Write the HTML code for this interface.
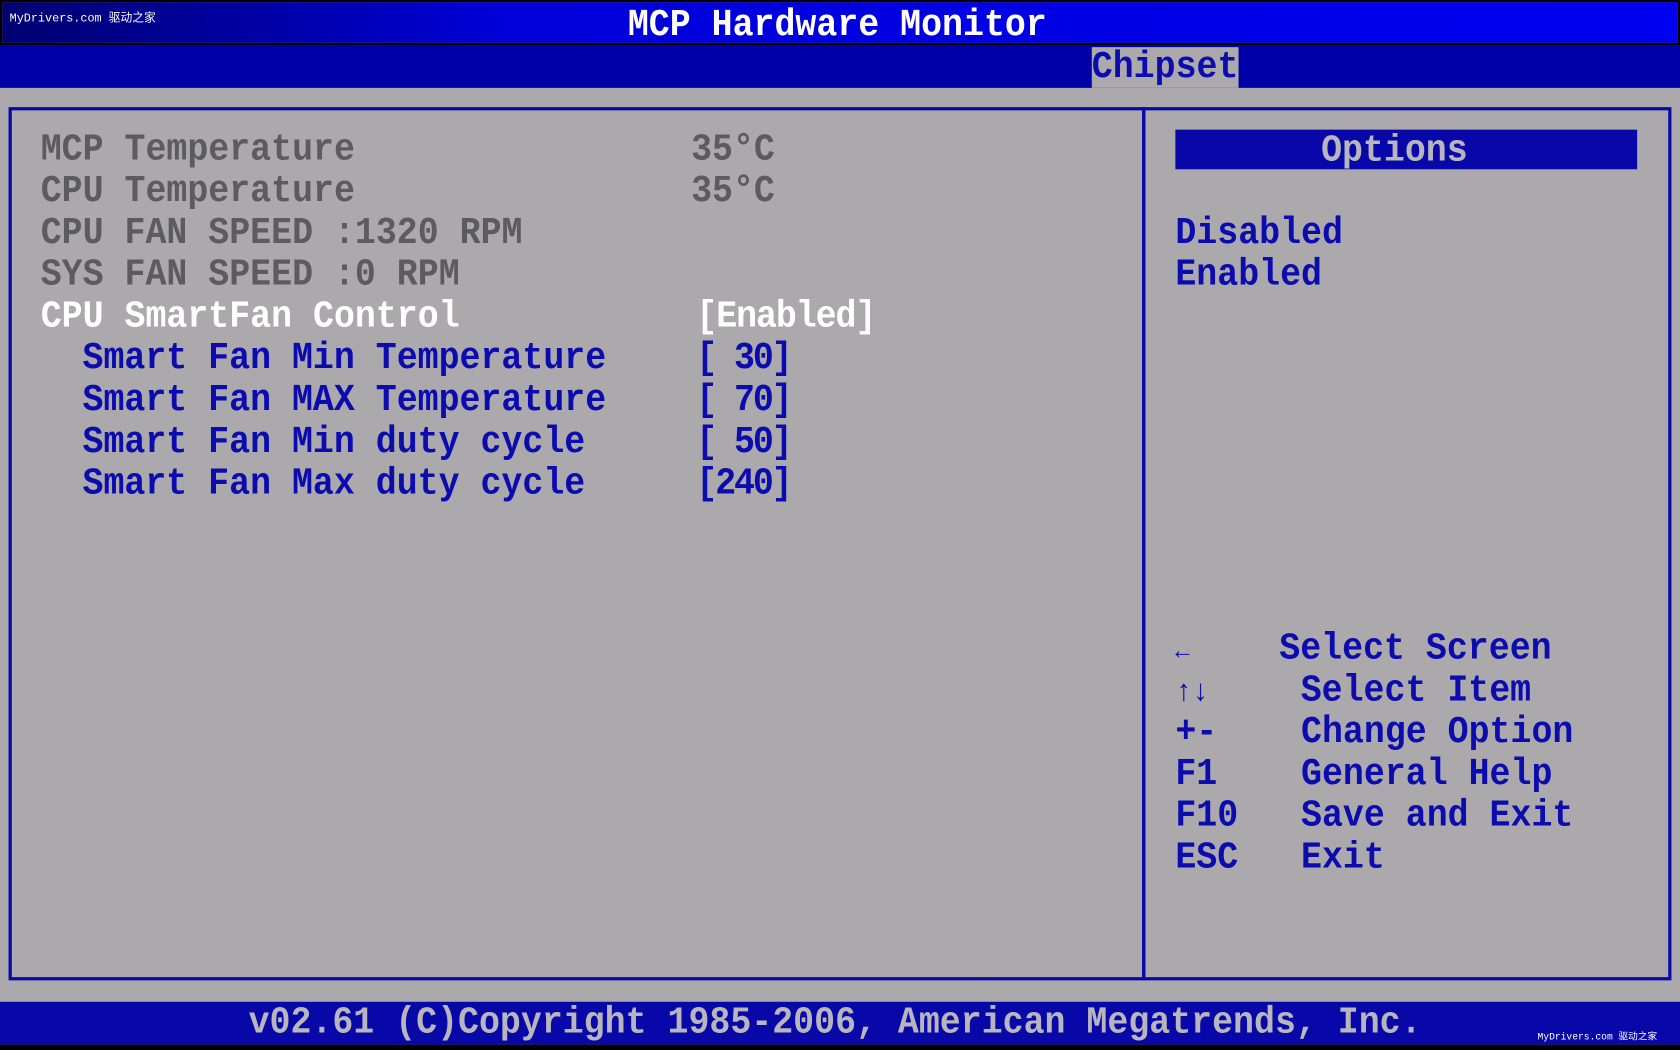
<!DOCTYPE html>
<html><head><meta charset="utf-8"><style>
html,body{margin:0;padding:0;width:1680px;height:1050px;overflow:hidden;background:#000}
#w{position:absolute;left:0;top:0;width:1568px;height:980px;transform:scale(1.07143);transform-origin:0 0;background:#aba9ac;font-family:"Liberation Mono",monospace;font-weight:bold;font-size:32.6px}
.a{position:absolute;white-space:pre;line-height:39px;transform:scaleY(1.08);transform-origin:0 50%}
.g{color:#5c5c60}.wh{color:#fff}.b{color:#0c0cae}
</style></head><body><div id="w">
<div style="position:absolute;left:0;top:0;width:1568px;height:42px;background:linear-gradient(90deg,#000070,#0000d8 30%,#0000f0);border:2px solid #000;box-sizing:border-box"></div>
<div style="position:absolute;left:9px;top:8px;color:#fff;font-size:11px;font-weight:normal;font-family:'Liberation Mono','Noto Sans CJK SC',monospace">MyDrivers.com 驱动之家</div>
<div class="a wh" style="left:586px;top:4px">MCP Hardware Monitor</div>
<div style="position:absolute;left:0;top:42px;width:1568px;height:40px;background:#0000a8"></div>
<div style="position:absolute;left:1019px;top:44px;width:137px;height:38px;background:#aba9ac"></div>
<div class="a b" style="left:1019px;top:43px">Chipset</div>
<div style="position:absolute;left:8px;top:100px;width:1061px;height:815px;border:3px solid #0808a8;box-sizing:border-box"></div>
<div style="position:absolute;left:1066px;top:100px;width:494px;height:815px;border:3px solid #0808a8;box-sizing:border-box"></div>
<div class="a g" style="left:38px;top:120px">MCP Temperature</div>
<div class="a g" style="left:645px;top:120px">35°C</div>
<div class="a g" style="left:38px;top:159px">CPU Temperature</div>
<div class="a g" style="left:645px;top:159px">35°C</div>
<div class="a g" style="left:38px;top:198px">CPU FAN SPEED :1320 RPM</div>
<div class="a g" style="left:38px;top:237px">SYS FAN SPEED :0 RPM</div>
<div class="a wh" style="left:38px;top:276px">CPU SmartFan Control</div>
<div class="a wh" style="left:650px;top:276px;letter-spacing:-1px">[Enabled]</div>
<div class="a b" style="left:77px;top:315px">Smart Fan Min Temperature</div>
<div class="a b" style="left:650px;top:315px;letter-spacing:-2px">[ 30]</div>
<div class="a b" style="left:77px;top:354px">Smart Fan MAX Temperature</div>
<div class="a b" style="left:650px;top:354px;letter-spacing:-2px">[ 70]</div>
<div class="a b" style="left:77px;top:393px">Smart Fan Min duty cycle</div>
<div class="a b" style="left:650px;top:393px;letter-spacing:-2px">[ 50]</div>
<div class="a b" style="left:77px;top:432px">Smart Fan Max duty cycle</div>
<div class="a b" style="left:650px;top:432px;letter-spacing:-2px">[240]</div>
<div style="position:absolute;left:1097px;top:121px;width:431px;height:37px;background:#0808a8"></div>
<div class="a" style="left:1233px;top:121px;color:#b8b6bc">Options</div>
<div class="a b" style="left:1097px;top:198px">Disabled</div>
<div class="a b" style="left:1097px;top:237px">Enabled</div>
<div class="a b" style="left:1097px;top:586px"><span style="font-size:22px">←</span></div>
<div class="a b" style="left:1194px;top:586px">Select Screen</div>
<div class="a b" style="left:1097px;top:625px"><span style="font-size:26px">↑↓</span></div>
<div class="a b" style="left:1214px;top:625px">Select Item</div>
<div class="a b" style="left:1097px;top:664px">+-    Change Option</div>
<div class="a b" style="left:1097px;top:703px">F1    General Help</div>
<div class="a b" style="left:1097px;top:742px">F10   Save and Exit</div>
<div class="a b" style="left:1097px;top:781px">ESC   Exit</div>
<div style="position:absolute;left:0;top:935px;width:1568px;height:40px;background:#0808a8"></div>
<div style="position:absolute;left:0;top:975px;width:1568px;height:5px;background:#000"></div>
<div class="a" style="left:232px;top:935px;color:#b8b6bc">v02.61 (C)Copyright 1985-2006, American Megatrends, Inc.</div>
<div style="position:absolute;left:1435px;top:960px;color:#fff;font-size:9px;font-weight:normal;font-family:'Liberation Mono','Noto Sans CJK SC',monospace">MyDrivers.com 驱动之家</div>
</div></body></html>
